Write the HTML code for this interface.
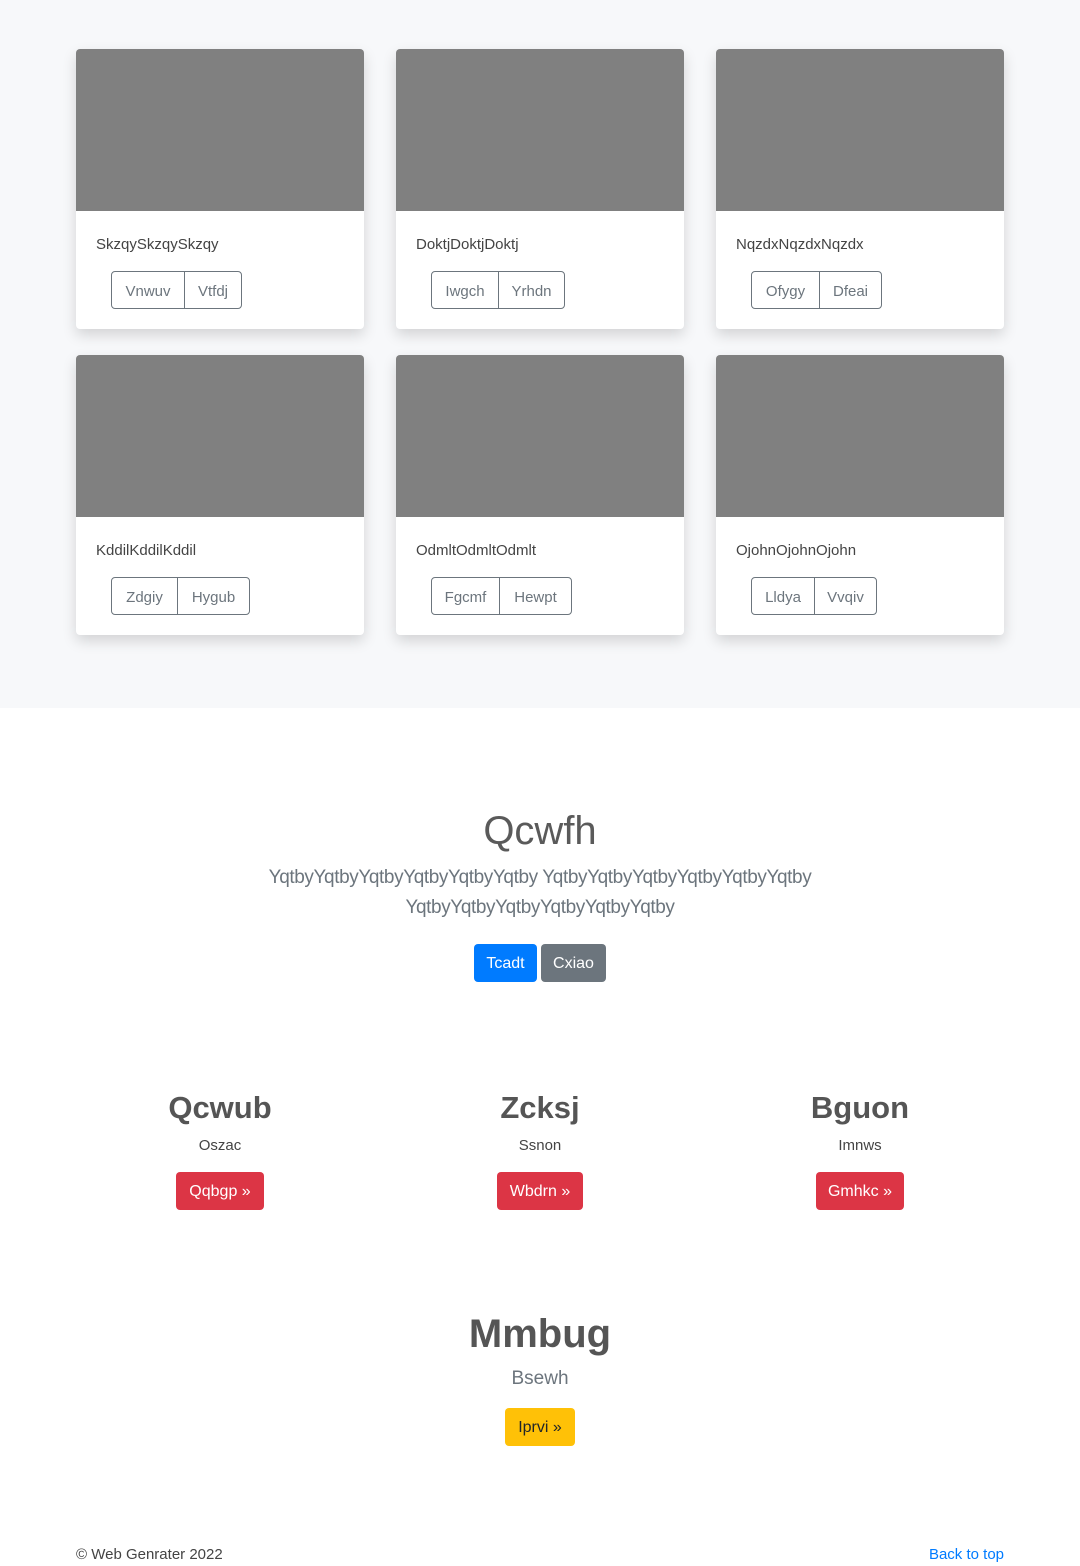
<!DOCTYPE html>
<html><head><meta charset="utf-8"><style>
*{box-sizing:border-box;margin:0;padding:0}
body{width:1080px;height:1566px;position:relative;background:#fff;font-family:"Liberation Sans",sans-serif;color:#212529;overflow:hidden}
.top{position:absolute;left:0;top:0;width:1080px;height:708px;background:#f7f8fa}
.card{position:absolute;width:288px;height:280px;background:#fff;border-radius:4px;box-shadow:0 6px 14px rgba(0,0,0,.15);overflow:hidden}
.card .img{height:162px;background:#808080}
.card .t{position:absolute;left:20px;top:187px;font-size:15px;color:#444}
.grp{position:absolute;left:35px;top:222px;height:38px;display:flex;border:1px solid #6c757d;border-radius:4px}
.grp span{display:flex;align-items:center;justify-content:center;font-size:15px;color:#6c757d;height:36px;padding-top:2px}
.grp span+span{border-left:1px solid #6c757d}
.c{position:absolute;left:0;width:1080px;text-align:center}
.col{position:absolute;width:360px;text-align:center}
.btn{position:absolute;height:38px;border-radius:4px;color:#fff;font-size:16px;display:flex;align-items:center;justify-content:center;padding-top:2px}
</style></head><body>
<div class="top"></div>

<div class="card" style="left:76px;top:49px"><div class="img"></div><div class="t">SkzqySkzqySkzqy</div><div class="grp"><span style="width:72px">Vnwuv</span><span style="width:57px">Vtfdj</span></div></div>
<div class="card" style="left:396px;top:49px"><div class="img"></div><div class="t">DoktjDoktjDoktj</div><div class="grp"><span style="width:66px">Iwgch</span><span style="width:66px">Yrhdn</span></div></div>
<div class="card" style="left:716px;top:49px"><div class="img"></div><div class="t">NqzdxNqzdxNqzdx</div><div class="grp"><span style="width:67px">Ofygy</span><span style="width:62px">Dfeai</span></div></div>
<div class="card" style="left:76px;top:355px"><div class="img"></div><div class="t">KddilKddilKddil</div><div class="grp"><span style="width:65px">Zdgiy</span><span style="width:72px">Hygub</span></div></div>
<div class="card" style="left:396px;top:355px"><div class="img"></div><div class="t">OdmltOdmltOdmlt</div><div class="grp"><span style="width:67px">Fgcmf</span><span style="width:72px">Hewpt</span></div></div>
<div class="card" style="left:716px;top:355px"><div class="img"></div><div class="t">OjohnOjohnOjohn</div><div class="grp"><span style="width:62px">Lldya</span><span style="width:62px">Vvqiv</span></div></div>

<div class="c" style="top:806px;font-size:40px;font-weight:300;color:#5a5a5a;line-height:50px">Qcwfh</div>
<div class="c" style="top:863px;font-size:19px;color:#6c757d;line-height:30px;letter-spacing:-0.4px">YqtbyYqtbyYqtbyYqtbyYqtbyYqtby YqtbyYqtbyYqtbyYqtbyYqtbyYqtby<br>YqtbyYqtbyYqtbyYqtbyYqtbyYqtby</div>
<div class="btn" style="left:474px;top:944px;width:63px;background:#007bff">Tcadt</div>
<div class="btn" style="left:541px;top:944px;width:65px;background:#6c757d">Cxiao</div>

<div class="col" style="left:40px;top:1089px"><div style="font-size:31px;font-weight:bold;color:#555;line-height:38px">Qcwub</div><div style="font-size:15px;color:#444;margin-top:10px">Oszac</div></div>
<div class="col" style="left:360px;top:1089px"><div style="font-size:31px;font-weight:bold;color:#555;line-height:38px">Zcksj</div><div style="font-size:15px;color:#444;margin-top:10px">Ssnon</div></div>
<div class="col" style="left:680px;top:1089px"><div style="font-size:31px;font-weight:bold;color:#555;line-height:38px">Bguon</div><div style="font-size:15px;color:#444;margin-top:10px">Imnws</div></div>
<div class="btn" style="left:176px;top:1172px;width:88px;background:#dc3545">Qqbgp »</div>
<div class="btn" style="left:497px;top:1172px;width:86px;background:#dc3545">Wbdrn »</div>
<div class="btn" style="left:816px;top:1172px;width:88px;background:#dc3545">Gmhkc »</div>

<div class="c" style="top:1309px;font-size:40px;font-weight:bold;color:#555;line-height:50px">Mmbug</div>
<div class="c" style="top:1367px;font-size:19px;color:#6c757d;line-height:24px">Bsewh</div>
<div class="btn" style="left:505px;top:1408px;width:70px;background:#ffc107;color:#212529">Iprvi »</div>

<div style="position:absolute;left:76px;top:1546px;font-size:15px;color:#444">© Web Genrater 2022</div>
<div style="position:absolute;right:76px;top:1546px;font-size:15px;color:#007bff">Back to top</div>
</body></html>
